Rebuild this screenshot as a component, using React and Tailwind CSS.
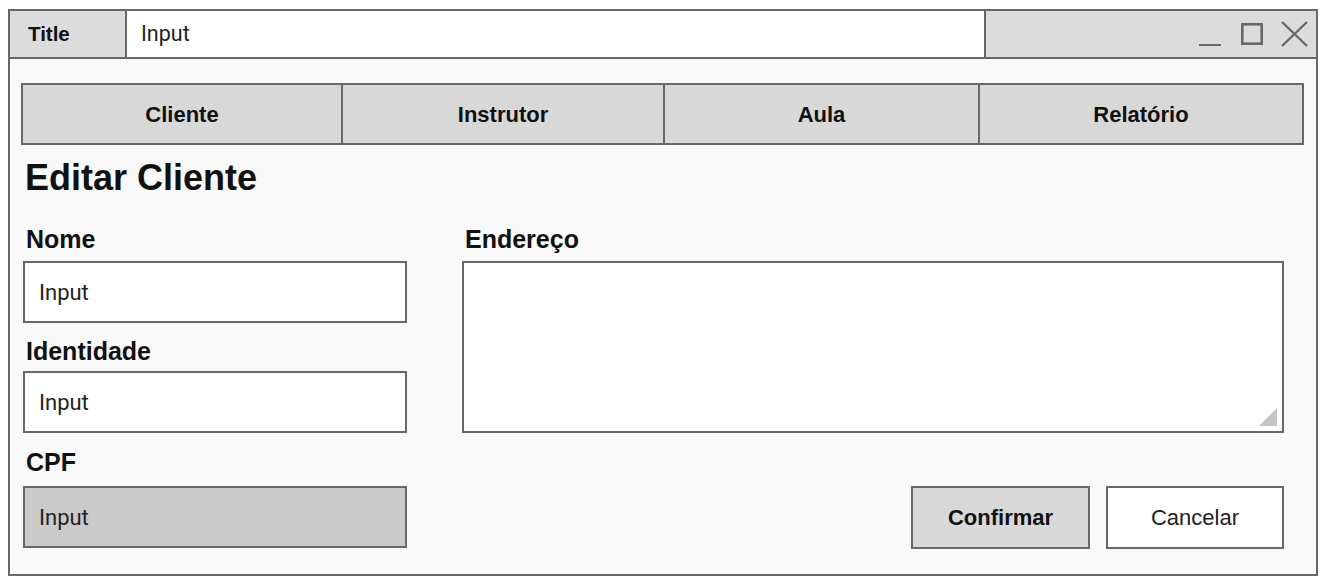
import React from 'react';

const tabs = [
  { label: 'Cliente', w: 'w-[320px]' },
  { label: 'Instrutor', w: 'w-[322px]' },
  { label: 'Aula', w: 'w-[315px]' },
  { label: 'Relatório', w: 'flex-1' },
];

const Label = ({ children, className = '' }) => (
  <div className={`h-[24px] leading-[24px] text-[25px] font-bold text-[#111] pl-[3px] ${className}`}>{children}</div>
);

const Field = ({ label, gray, labelGap = '', inputGap }) => (
  <div>
    <Label className={labelGap}>{label}</Label>
    <div className={`${inputGap} h-[62px] border-2 border-[#686868] flex items-center pl-[14px] font-['Roboto'] text-[22px] text-[#222] ${gray ? 'bg-[#cacaca]' : 'bg-white'}`}>
      Input
    </div>
  </div>
);

export default function App() {
  return (
    <div className="font-['Liberation_Sans',Arial,sans-serif] bg-white w-[1329px] h-[585px] pt-[9px] pl-[8px]">
      <div className="w-[1310px] h-[567px] border-2 border-[#686868] bg-[#f9f9f9] flex flex-col">
        {/* Title bar */}
        <div className="h-[48px] border-b-2 border-[#686868] flex">
          <div className="w-[117px] bg-[#dcdcdc] border-r-2 border-[#686868] flex items-center pl-[18px] text-[20.5px] font-bold text-[#111]">
            Title
          </div>
          <div className="w-[859px] bg-white border-r-2 border-[#686868] flex items-center pl-[14px] font-['Roboto'] text-[21.5px] text-[#222]">
            Input
          </div>
          <div className="flex-1 bg-[#dcdcdc] flex justify-end pr-[6px]">
            <svg width="114" height="46" viewBox="0 0 114 46" fill="none" stroke="#686868">
              <line x1="3" y1="34" x2="25" y2="34" strokeWidth="2" />
              <rect x="46.3" y="13.3" width="19.4" height="19.4" strokeWidth="2.6" />
              <line x1="86" y1="11" x2="111" y2="35" strokeWidth="2.4" />
              <line x1="111" y1="11" x2="86" y2="35" strokeWidth="2.4" />
            </svg>
          </div>
        </div>

        {/* Content */}
        <div className="pt-[24px] pl-[11px]">
          <div className="w-[1283px] h-[62px] border-2 border-[#686868] flex bg-[#d8d8d8]">
            {tabs.map((t, i) => (
              <div
                key={t.label}
                className={`${t.w} flex items-center justify-center text-[22px] font-bold text-[#111] ${i < tabs.length - 1 ? 'border-r-2 border-[#686868]' : ''}`}
              >
                {t.label}
              </div>
            ))}
          </div>

          <h1 className="mt-[13px] pl-[4px] text-[36px] leading-[40px] font-bold text-[#111]">Editar Cliente</h1>

          <div className="mt-[29px] flex">
            <div className="ml-[2px] w-[384px]">
              <Field label="Nome" inputGap="mt-[10px]" />
              <Field label="Identidade" labelGap="mt-[16px]" inputGap="mt-[8px]" />
              <Field label="CPF" labelGap="mt-[17px]" inputGap="mt-[12px]" gray />
            </div>

            <div className="ml-[55px] w-[822px]">
              <Label>Endereço</Label>
              <div className="relative mt-[10px] h-[172px] border-2 border-[#686868] bg-white">
                <svg className="absolute right-[5px] bottom-[5px]" width="18" height="18" viewBox="0 0 18 18">
                  <polygon points="18,0 18,18 0,18" fill="#c4c4c4" />
                </svg>
              </div>
              <div className="mt-[53px] flex justify-end gap-[16px]">
                <button className="w-[179px] h-[63px] border-2 border-[#686868] bg-[#d8d8d8] text-[22px] font-bold text-[#111]">
                  Confirmar
                </button>
                <button className="w-[178px] h-[63px] border-2 border-[#686868] bg-white text-[22px] text-[#222]">
                  Cancelar
                </button>
              </div>
            </div>
          </div>
        </div>
      </div>
    </div>
  );
}
